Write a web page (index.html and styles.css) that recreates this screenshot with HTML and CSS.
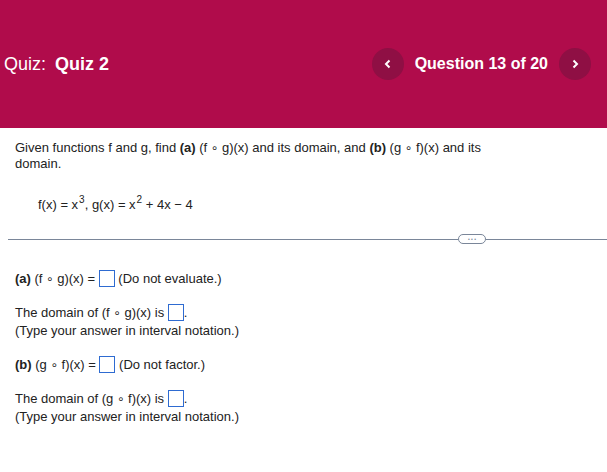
FILE: index.html
```html
<!DOCTYPE html>
<html>
<head>
<meta charset="utf-8">
<link rel="stylesheet" href="styles.css">
</head>
<body>
<header class="top">
  <div class="quiz"><span>Quiz:</span> <b>Quiz 2</b></div>
  <div class="nav">
    <span class="circ"><svg width="8" height="10" viewBox="0 0 8 10"><path d="M5.5 1.5 L2 5 L5.5 8.5" fill="none" stroke="#fff" stroke-width="2"/></svg></span>
    <span class="qnum">Question 13 of 20</span>
    <span class="circ"><svg width="8" height="10" viewBox="0 0 8 10"><path d="M2.5 1.5 L6 5 L2.5 8.5" fill="none" stroke="#fff" stroke-width="2"/></svg></span>
  </div>
</header>
<main class="content">
  <p class="intro">Given functions f and g, find <b>(a)</b> (f <span class="o">∘</span> g)(x) and its domain, and <b>(b)</b> (g <span class="o">∘</span> f)(x) and its domain.</p>
  <p class="formula">f(x) = x<sup>3</sup>, g(x) = x<sup>2</sup> + 4x − 4</p>
</main>
<div class="divider"><span class="line"></span><span class="pill">• • •</span><span class="line short"></span></div>
<section class="answers">
  <p class="row"><b>(a)</b> (f <span class="o">∘</span> g)(x) = <span class="box"></span> (Do not evaluate.)</p>
  <div class="pair">
    <p class="row">The domain of (f <span class="o">∘</span> g)(x) is <span class="box"></span>.</p>
    <p class="row">(Type your answer in interval notation.)</p>
  </div>
  <p class="row"><b>(b)</b> (g <span class="o">∘</span> f)(x) = <span class="box"></span> (Do not factor.)</p>
  <div class="pair">
    <p class="row">The domain of (g <span class="o">∘</span> f)(x) is <span class="box"></span>.</p>
    <p class="row">(Type your answer in interval notation.)</p>
  </div>
</section>
</body>
</html>
```
FILE: styles.css
```css
html, body { margin: 0; padding: 0; background: #fff; }
body { font-family: "Liberation Sans", Arial, sans-serif; color: #222; font-size: 13px; }
.top {
  height: 128px;
  background: #b00c4b;
  display: flex;
  align-items: center;
  justify-content: space-between;
  color: #fff;
  padding: 0 16px 0 4px;
  box-sizing: border-box;
}
.quiz { font-size: 18px; }
.quiz b { margin-left: 4px; }
.nav { display: flex; align-items: center; }
.circ {
  width: 32px; height: 32px; border-radius: 50%;
  background: #8f0f44;
  display: flex; align-items: center; justify-content: center;
}
.qnum { font-weight: bold; font-size: 16px; margin: 0 11px; }
.content { padding: 12px 15px 0 15px; }
.intro { margin: 0; line-height: 16px; max-width: 475px; }
.formula { margin: 25px 0 0 23px; line-height: 16px; }
.formula sup { font-size: 10px; vertical-align: 6px; line-height: 0; margin-left: 1px; }
.o { font-family: "DejaVu Sans", sans-serif; font-size: 12px; }
.divider { display: flex; align-items: center; margin: 21px 0 0 8px; }
.line { flex: 1; height: 1px; background: #7a8699; }
.line.short { flex: 0 0 121px; }
.pill {
  width: 26px; height: 8px; border: 1px solid #7a8699; border-radius: 5px;
  font-size: 5px; line-height: 8px; text-align: center; color: #7a8699; letter-spacing: 0;
}
.answers { padding: 26px 15px 0 15px; }
.row { margin: 0; line-height: 18px; }
.pair { margin: 16px 0 16px 0; }
.box {
  display: inline-block; width: 14px; height: 15px; border: 1px solid #2e6bd1;
  vertical-align: -4px; background: #fff;
}
```
